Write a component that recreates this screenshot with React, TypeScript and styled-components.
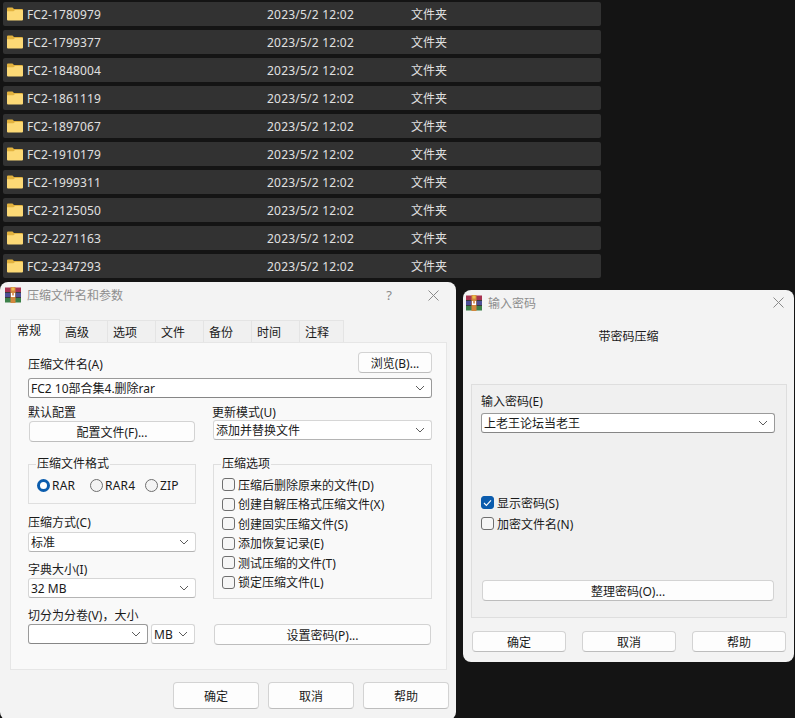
import React from "react";
import styled, { createGlobalStyle } from "styled-components";

const Global = createGlobalStyle`
  html, body { margin: 0; padding: 0; background: #141414; }
  body {
    width: 795px; height: 718px; overflow: hidden;
    font-family: "Noto Sans", "Noto Sans CJK SC", sans-serif;
    font-size: 12px; color: #1a1a1a;
  }
  * { box-sizing: border-box; }
`;

const Page = styled.div`
  width: 795px; height: 718px; overflow: hidden;
  display: flex; flex-direction: column; padding-top: 2px;
`;
const List = styled.div`
  display: flex; flex-direction: column; gap: 4px;
  width: 598px; margin-left: 3px;
`;
const Row = styled.div`
  height: 24px; background: #323232; color: #e0e0e0;
  display: grid; grid-template-columns: 264px 144px 1fr; align-items: center;
  border-radius: 2px; font-size: 12px;
`;
const NameCell = styled.div`
  display: flex; align-items: center; gap: 4px; padding-left: 4px;
  letter-spacing: 0.12px;
`;
const TimeCell = styled.span`
  letter-spacing: 0.22px;
`;
const Dialogs = styled.div`
  display: flex; align-items: flex-start; margin-top: 4px; gap: 7px;
`;
const Window = styled.div<{ $w: number; $h: number; $mt?: number }>`
  width: ${p => p.$w}px; height: ${p => p.$h}px; margin-top: ${p => p.$mt ?? 0}px;
  background: #f3f3f3; border-radius: 8px; flex: none; overflow: hidden;
`;
const TitleBar = styled.div<{ $pl: number; $pr: number; $h?: number }>`
  height: ${p => p.$h ?? 26}px; display: flex; align-items: center;
  padding: 0 ${p => p.$pr}px 0 ${p => p.$pl}px; color: #8e8e8e;
`;
const TitleText = styled.span`
  margin-left: 6px; flex: 1; font-size: 12px;
`;
const Help = styled.span`
  margin-right: 36px; color: #8a8a8a; font-size: 13px;
`;
const TabBar = styled.div`
  display: flex; margin: 10px 0 0 10px; height: 24px; align-items: flex-end;
`;
const Tab = styled.div<{ $active?: boolean }>`
  height: ${p => (p.$active ? 24 : 22)}px; width: ${p => (p.$active ? 50 : 48)}px;
  background: ${p => (p.$active ? "#f9f9f9" : "#f0f0f0")};
  border: 1px solid #e4e4e4; border-bottom: none; border-left-width: ${p => (p.$active ? 1 : 0)}px;
  display: flex; align-items: center;
  padding: 0 0 ${p => (p.$active ? 3 : 0)}px ${p => (p.$active ? 6 : 5)}px;
  margin-bottom: ${p => (p.$active ? -1 : 0)}px; position: relative; z-index: ${p => (p.$active ? 1 : 0)};
  &:last-child { width: 44px; }
`;
const TabPanel = styled.div`
  width: 437px; height: 328px; margin-left: 10px; background: #f9f9f9;
  border: 1px solid #e6e6e6; padding: 9px 14px 0 17px;
  display: flex; flex-direction: column;
`;
const Between = styled.div`
  display: flex; justify-content: space-between; align-items: flex-end; height: 21px;
`;
const Label = styled.div<{ $mt?: number; $ml?: number }>`
  height: 16px; line-height: 16px; margin-top: ${p => p.$mt ?? 0}px; margin-left: ${p => p.$ml ?? 0}px;
  white-space: nowrap;
`;
const Btn = styled.div<{ $w?: number; $h?: number; $mt?: number; $ml?: number }>`
  width: ${p => (p.$w ? `${p.$w}px` : "auto")}; height: ${p => p.$h ?? 21}px;
  margin-top: ${p => p.$mt ?? 0}px; margin-left: ${p => p.$ml ?? 0}px;
  background: #fdfdfd; border: 1px solid #d3d3d3; border-bottom-color: #bdbdbd;
  border-radius: 4px; display: flex; align-items: center; justify-content: center; flex: none;
  white-space: nowrap;
`;
const Select = styled.div<{ $w?: number; $strong?: boolean; $mt?: number; $ml?: number }>`
  width: ${p => (p.$w ? `${p.$w}px` : "auto")}; height: 20px; flex: none;
  margin-top: ${p => p.$mt ?? 0}px; margin-left: ${p => p.$ml ?? 0}px;
  background: #fff; border: 1px solid ${p => (p.$strong ? "#9a9a9a" : "#d6d6d6")};
  border-bottom-color: ${p => (p.$strong ? "#868686" : "#b4b4b4")};
  border-radius: 3px; display: flex; align-items: center; justify-content: space-between;
  padding: 0 6px 0 2px; white-space: nowrap;
`;
const Columns = styled.div`
  display: grid; grid-template-columns: 168px 219px; column-gap: 17px; margin-top: 7px;
`;
const Col = styled.div`
  display: flex; flex-direction: column;
`;
const Group = styled.fieldset<{ $h: number; $mt: number }>`
  height: ${p => p.$h}px; margin: ${p => p.$mt}px 0 0; padding: 0 0 0 8px; min-width: 0;
  border: 1px solid #dfdfdf;
`;
const Legend = styled.legend`
  padding: 0 1px; line-height: 14px; height: 14px; margin-left: -1px;
`;
const RadioRow = styled.div`
  display: flex; align-items: center; height: 20px; margin-top: 4px;
`;
const RadioItem = styled.div<{ $w: number }>`
  display: flex; align-items: center; width: ${p => p.$w}px; gap: 2px; letter-spacing: 0.2px;
`;
const Radio = styled.span<{ $on?: boolean }>`
  width: 13px; height: 13px; border-radius: 50%; flex: none;
  ${p => p.$on
    ? "background: #fff; border: 3.5px solid #0b5cad;"
    : "background: #f4f4f4; border: 1px solid #6f6f6f;"}
`;
const CheckList = styled.div`
  display: flex; flex-direction: column; margin-top: 4px;
`;
const CheckRow = styled.div<{ $h?: number; $mt?: number }>`
  display: flex; align-items: center; gap: 3px; height: ${p => p.$h ?? 19.5}px; white-space: nowrap;
  margin-top: ${p => p.$mt ?? 0}px;
`;
const Box = styled.span<{ $on?: boolean }>`
  width: 13px; height: 13px; border-radius: 3px; flex: none;
  display: flex; align-items: center; justify-content: center;
  background: ${p => (p.$on ? "#0b5cad" : "#f6f6f6")};
  border: 1px solid ${p => (p.$on ? "#0b5cad" : "#6f6f6f")};
`;
const Footer = styled.div`
  display: flex; gap: 9px; margin: 12px 0 0 173px;
`;
const SmallBtnRow = styled.div`
  display: flex; align-items: flex-start;
`;
const Heading = styled.div`
  text-align: center; margin-top: 12px; height: 20px; line-height: 20px;
`;
const PwPanel = styled.div`
  width: 316px; height: 234px; margin: 37px 0 0 8px; background: #f0f0f0;
  border: 1px solid #dedede; padding: 9px 10px 0 9px;
  display: flex; flex-direction: column;
`;
const PwFooter = styled.div`
  display: flex; justify-content: space-between; margin: 13px 8px 0 9px;
`;

const Chevron = () => (
  <svg width="10" height="6" viewBox="0 0 10 6" fill="none" style={{ marginLeft: "auto" }}>
    <path d="M1 1l4 4 4-4" stroke="#5c5c5c" strokeWidth="1" />
  </svg>
);
const Close = () => (
  <svg width="11" height="11" viewBox="0 0 11 11" fill="none">
    <path d="M.5.5l10 10M10.5.5l-10 10" stroke="#8a8a8a" strokeWidth="1" />
  </svg>
);
const Folder = () => (
  <svg width="16" height="14" viewBox="0 0 16 14">
    <path d="M0 1.5a1 1 0 0 1 1-1h4.5L7 2h8a1 1 0 0 1 1 1v2H0z" fill="#e2b23e" />
    <path d="M0 4.2h6.5L8 3h7a1 1 0 0 1 1 1v8.5a1 1 0 0 1-1 1H1a1 1 0 0 1-1-1z" fill="#fcd976" />
  </svg>
);
const RarIcon = () => (
  <svg width="16" height="16" viewBox="0 0 16 16">
    <rect x="0" y="0.5" width="16" height="5" fill="#a83350" />
    <rect x="0" y="5.5" width="16" height="5" fill="#4d4f96" />
    <rect x="0" y="10.5" width="16" height="5" fill="#3c8048" />
    <rect x="0" y="5" width="16" height="1" fill="#3a3a3a" />
    <rect x="0" y="10" width="16" height="1" fill="#3a3a3a" />
    <rect x="5.5" y="0" width="5" height="16" fill="#d2873e" />
    <path d="M6 6h1.2v2.6h1.6V6H10v4H6z" fill="#fff" />
    <rect x="6.5" y="0.5" width="3" height="3" fill="#e9bd4a" />
  </svg>
);
const Tick = () => (
  <svg width="9" height="8" viewBox="0 0 9 8" fill="none">
    <path d="M1 4l2.4 2.4L8 1.4" stroke="#fff" strokeWidth="1.1" />
  </svg>
);

const files = ["1780979", "1799377", "1848004", "1861119", "1897067", "1910179", "1999311", "2125050", "2271163", "2347293"];
const tabs = ["高级", "选项", "文件", "备份", "时间", "注释"];
const options = ["压缩后删除原来的文件(D)", "创建自解压格式压缩文件(X)", "创建固实压缩文件(S)", "添加恢复记录(E)", "测试压缩的文件(T)", "锁定压缩文件(L)"];

export default function App() {
  return (
    <Page>
      <Global />
      <List>
        {files.map(f => (
          <Row key={f}>
            <NameCell><Folder />FC2-{f}</NameCell>
            <TimeCell>2023/5/2 12:02</TimeCell>
            <span>文件夹</span>
          </Row>
        ))}
      </List>
      <Dialogs>
        <Window $w={456} $h={438}>
          <TitleBar $pl={5} $pr={17}>
            <RarIcon />
            <TitleText>压缩文件名和参数</TitleText>
            <Help>?</Help>
            <Close />
          </TitleBar>
          <TabBar>
            <Tab $active>常规</Tab>
            {tabs.map(t => <Tab key={t}>{t}</Tab>)}
          </TabBar>
          <TabPanel>
            <Between>
              <Label>压缩文件名(A)</Label>
              <Btn $w={74}>浏览(B)...</Btn>
            </Between>
            <Select $strong $mt={5}>FC2 10部合集4.删除rar<Chevron /></Select>
            <Columns>
              <Col>
                <Label>默认配置</Label>
                <Btn $w={166} $ml={1}>配置文件(F)...</Btn>
                <Group $h={47} $mt={15}>
                  <Legend>压缩文件格式</Legend>
                  <RadioRow>
                    <RadioItem $w={53}><Radio $on />RAR</RadioItem>
                    <RadioItem $w={55}><Radio />RAR4</RadioItem>
                    <RadioItem $w={40}><Radio />ZIP</RadioItem>
                  </RadioRow>
                </Group>
                <Label $mt={11}>压缩方式(C)</Label>
                <Select $mt={1}>标准<Chevron /></Select>
                <Label $mt={10}>字典大小(I)</Label>
                <Select>32 MB<Chevron /></Select>
                <Label $mt={10}>切分为分卷(V)，大小</Label>
                <SmallBtnRow>
                  <Select $w={120} $strong><Chevron /></Select>
                  <Select $w={44} $ml={3}>MB<Chevron /></Select>
                </SmallBtnRow>
              </Col>
              <Col>
                <Label $ml={-1}>更新模式(U)</Label>
                <Select $mt={-1}>添加并替换文件<Chevron /></Select>
                <Group $h={142} $mt={17}>
                  <Legend>压缩选项</Legend>
                  <CheckList>
                    {options.map(o => <CheckRow key={o}><Box />{o}</CheckRow>)}
                  </CheckList>
                </Group>
                <Btn $w={217} $ml={1} $mt={25}>设置密码(P)...</Btn>
              </Col>
            </Columns>
          </TabPanel>
          <Footer>
            <Btn $w={86} $h={27}>确定</Btn>
            <Btn $w={86} $h={27}>取消</Btn>
            <Btn $w={86} $h={27}>帮助</Btn>
          </Footer>
        </Window>
        <Window $w={331} $h={372} $mt={8}>
          <TitleBar $pl={3} $pr={10} $h={25}>
            <RarIcon />
            <TitleText>输入密码</TitleText>
            <Close />
          </TitleBar>
          <Heading>带密码压缩</Heading>
          <PwPanel>
            <Label>输入密码(E)</Label>
            <Select $w={294} $strong $mt={3}>上老王论坛当老王<Chevron /></Select>
            <CheckRow $h={21} $mt={59}><Box $on><Tick /></Box>显示密码(S)</CheckRow>
            <CheckRow $h={21}><Box />加密文件名(N)</CheckRow>
            <Btn $w={292} $ml={1} $mt={46}>整理密码(O)...</Btn>
          </PwPanel>
          <PwFooter>
            <Btn $w={94}>确定</Btn>
            <Btn $w={94}>取消</Btn>
            <Btn $w={94}>帮助</Btn>
          </PwFooter>
        </Window>
      </Dialogs>
    </Page>
  );
}
